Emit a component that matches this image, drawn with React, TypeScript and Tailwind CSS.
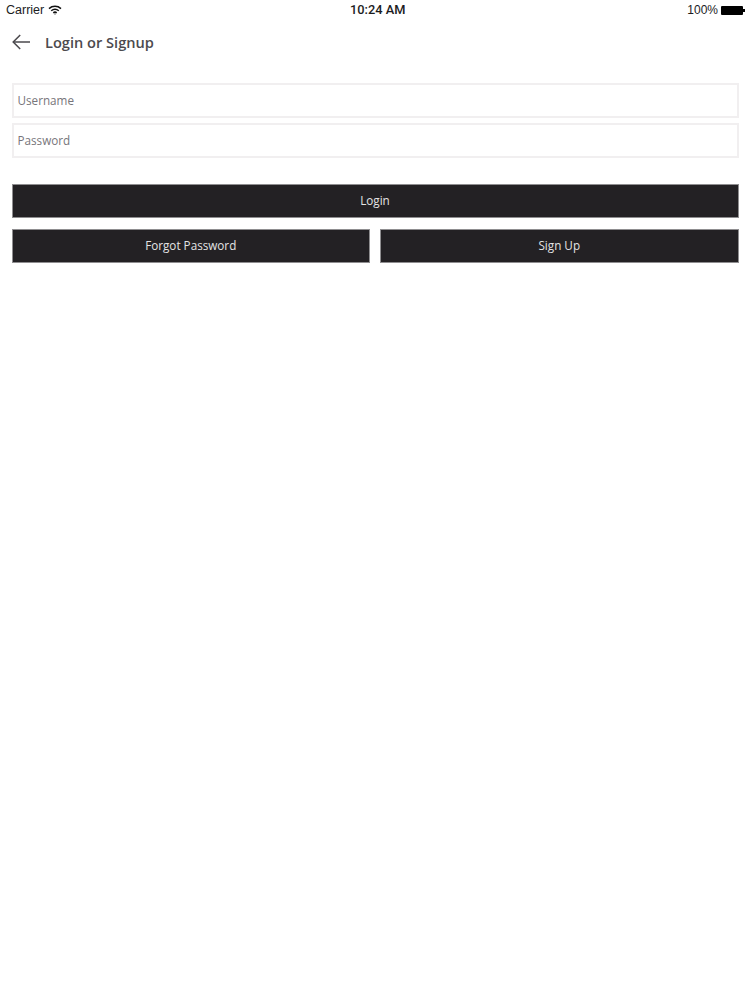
import React from 'react'

const sans = 'font-["Open_Sans",sans-serif]'

const StatusBar = () => (
  <div className='relative flex h-[20px] items-center justify-between pl-[6px] pr-[5px] font-["Liberation_Sans",sans-serif] text-[12.5px] text-[#1c1c1e]'>
    <div className="flex items-center gap-[4px]">
      <span>Carrier</span>
      <svg width="14" height="10" viewBox="0 0 14 10" fill="none" stroke="#111" strokeWidth="1.5">
        <path d="M1 3.6C4.4.6 9.6.6 13 3.6" />
        <path d="M3.2 5.8c2.2-1.9 5.4-1.9 7.6 0" />
        <path d="M5.3 7.8c1-.8 2.4-.8 3.4 0" />
        <circle cx="7" cy="9" r=".6" fill="#111" stroke="none" />
      </svg>
    </div>
    <span className='absolute left-[350px] font-["Roboto",sans-serif] text-[12.8px] font-medium'>10:24 AM</span>
    <div className="flex items-center gap-[3px]">
      <span className="text-[12px]">100%</span>
      <div className="flex items-center">
        <div className="h-[9px] w-[22px] rounded-[1px] bg-black" />
        <div className="h-[3px] w-[2px] bg-black" />
      </div>
    </div>
  </div>
)

const Field = ({ placeholder }: { placeholder: string }) => (
  <input
    placeholder={placeholder}
    className="block h-[35px] w-full border-2 border-[#f1eff0] bg-white px-[4px] pb-[2px] text-[11.7px] text-[#77757a] outline-none placeholder:text-[#77757a]"
  />
)

const Button = ({ label, className = '' }: { label: string; className?: string }) => (
  <button className={`h-[34px] border border-[#8f8e90] bg-[#232124] text-[11.7px] text-[#e4e4e4] ${className}`}>
    {label}
  </button>
)

export default function App() {
  return (
    <div className={`min-h-[1000px] bg-white ${sans}`}>
      <StatusBar />
      <div className="flex h-[44px] items-center pl-[12px]">
        <svg width="18" height="16" viewBox="0 0 18 16" fill="none" stroke="#4a484c" strokeWidth="1.5">
          <path d="M18 8H1.2" />
          <path d="M8.2 1 1.2 8l7 7" />
        </svg>
        <h1 className="ml-[15px] mt-[2px] text-[14.6px] font-semibold text-[#4c4a4e]">Login or Signup</h1>
      </div>
      <div className="px-[11.5px] pt-[19px]">
        <div className="flex flex-col gap-[5px]">
          <Field placeholder="Username" />
          <Field placeholder="Password" />
        </div>
        <div className="mt-[26px] flex flex-col gap-[11px]">
          <Button label="Login" className="w-full" />
          <div className="flex gap-[10px]">
            <Button label="Forgot Password" className="flex-1" />
            <Button label="Sign Up" className="flex-1" />
          </div>
        </div>
      </div>
    </div>
  )
}
